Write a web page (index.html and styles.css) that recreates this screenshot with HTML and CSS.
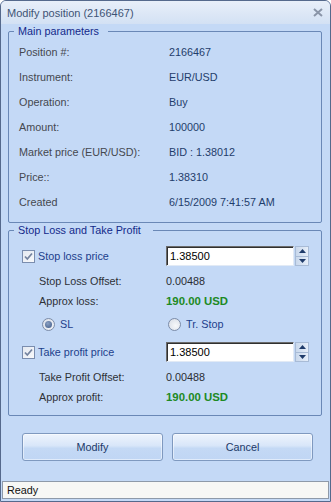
FILE: index.html
```html
<!DOCTYPE html>
<html>
<head>
<meta charset="utf-8">
<link rel="stylesheet" href="styles.css">
</head>
<body>
<div class="window">
  <div class="titlebar">
    <span class="title">Modify position (2166467)</span>
    <svg class="close" width="10" height="9" viewBox="0 0 10 9"><path d="M1 1 L9 8 M9 1 L1 8" stroke="#8a95a8" stroke-width="2" fill="none"/></svg>
  </div>
  <div class="main">
    <fieldset class="group">
      <legend>Main parameters</legend>
      <div class="params">
        <span class="lbl">Position #:</span><span class="val">2166467</span>
        <span class="lbl">Instrument:</span><span class="val">EUR/USD</span>
        <span class="lbl">Operation:</span><span class="val">Buy</span>
        <span class="lbl">Amount:</span><span class="val">100000</span>
        <span class="lbl">Market price (EUR/USD):</span><span class="val">BID : 1.38012</span>
        <span class="lbl">Price::</span><span class="val">1.38310</span>
        <span class="lbl">Created</span><span class="val">6/15/2009 7:41:57 AM</span>
      </div>
    </fieldset>
    <fieldset class="group">
      <legend class="legend2">Stop Loss and Take Profit</legend>
      <div class="sltp">
        <div class="row">
          <label class="check"><span class="cb"><svg width="11" height="11" viewBox="0 0 11 11"><path d="M2 5.5 L4.3 8 L9 2.5" fill="none" stroke="#7584a0" stroke-width="1.8"/></svg></span><span class="cblbl">Stop loss price</span></label>
          <div class="spin"><span class="field">1.38500</span><span class="spinner"><span class="half"><svg width="7" height="4" viewBox="0 0 7 4"><path d="M0 4 L3.5 0 L7 4Z" fill="#1f3b6a"/></svg></span><span class="half"><svg width="7" height="4" viewBox="0 0 7 4"><path d="M0 0 L3.5 4 L7 0Z" fill="#1f3b6a"/></svg></span></span></div>
        </div>
        <div class="row offset"><span class="lbl2">Stop Loss Offset:</span><span class="num">0.00488</span></div>
        <div class="row"><span class="lbl2">Approx loss:</span><span class="money">190.00 USD</span></div>
        <div class="row radios">
          <label class="radio first"><span class="rb"><span class="dot"></span></span><span class="rlbl">SL</span></label>
          <label class="radio second"><span class="rb"></span><span class="rlbl">Tr. Stop</span></label>
        </div>
        <div class="row check2">
          <label class="check"><span class="cb"><svg width="11" height="11" viewBox="0 0 11 11"><path d="M2 5.5 L4.3 8 L9 2.5" fill="none" stroke="#7584a0" stroke-width="1.8"/></svg></span><span class="cblbl">Take profit price</span></label>
          <div class="spin"><span class="field">1.38500</span><span class="spinner"><span class="half"><svg width="7" height="4" viewBox="0 0 7 4"><path d="M0 4 L3.5 0 L7 4Z" fill="#1f3b6a"/></svg></span><span class="half"><svg width="7" height="4" viewBox="0 0 7 4"><path d="M0 0 L3.5 4 L7 0Z" fill="#1f3b6a"/></svg></span></span></div>
        </div>
        <div class="row offset"><span class="lbl2">Take Profit Offset:</span><span class="num">0.00488</span></div>
        <div class="row"><span class="lbl2">Approx profit:</span><span class="money">190.00 USD</span></div>
      </div>
    </fieldset>
    <div class="buttons">
      <button class="btn">Modify</button>
      <button class="btn">Cancel</button>
    </div>
  </div>
  <div class="status">Ready</div>
</div>
</body>
</html>
```
FILE: styles.css
```css
html, body {
  margin: 0;
  padding: 0;
  background: #ffffff;
}
body {
  font-family: "Liberation Sans", Arial, sans-serif;
  font-size: 10.8px;
}
.window {
  width: 331px;
  height: 502px;
  box-sizing: border-box;
  border: 1px solid #55698c;
  border-radius: 6px 6px 0 0;
  background: #c4d9f6;
  display: flex;
  flex-direction: column;
  overflow: hidden;
}
.titlebar {
  height: 23px;
  flex: none;
  display: flex;
  align-items: center;
  justify-content: space-between;
  padding: 0 7px 0 6px;
  background: linear-gradient(#e8eff9, #d3e1f4);
  color: #3e5475;
  font-size: 11px;
}
.close { display: block; }
.main {
  flex: 1;
  display: flex;
  flex-direction: column;
  padding: 0 8px 0 7px;
}
.group {
  margin: 0;
  padding: 0 0 8px 0;
  border: 1px solid #6a88b6;
  border-radius: 2px;
  min-inline-size: 0;
}
.group legend {
  margin-left: 5px;
  padding: 0 9px 0 4px;
  line-height: 15px;
  color: #13298a;
}
.group .legend2 { padding-right: 12px; }
.params {
  display: grid;
  grid-template-columns: 150px 1fr;
  grid-auto-rows: 25px;
  align-items: center;
  padding-left: 10px;
}
.lbl { color: #44484f; }
.val { color: #1f3d6b; }
.sltp {
  display: flex;
  flex-direction: column;
  padding: 8px 0 0 13px;
}
.row {
  display: grid;
  grid-template-columns: 144px auto;
  height: 20px;
  align-items: center;
}
.row.offset { margin-top: 5px; }
.row.radios { margin-top: 3px; }
.row.check2 { margin-top: 8px; }
.check {
  display: flex;
  align-items: center;
  gap: 3px;
}
.cb {
  width: 13px;
  height: 13px;
  box-sizing: border-box;
  border: 1px solid #7a8dae;
  background: linear-gradient(135deg, #e4e9f1, #f8f9fb);
  display: flex;
  align-items: center;
  justify-content: center;
}
.cb svg { display: block; }
.cblbl { color: #1d3f8c; }
.lbl2 { color: #2e3136; padding-left: 17px; }
.num { color: #2a2d33; }
.money { color: #1d8a24; font-weight: bold; font-size: 11.4px; }
.spin {
  display: flex;
  gap: 1px;
  height: 20px;
}
.field {
  width: 128px;
  height: 20px;
  box-sizing: border-box;
  border: 1px solid;
  border-color: #6b6b6b #e2eaf5 #e2eaf5 #6b6b6b;
  box-shadow: inset 1px 1px 0 #303030;
  background: #ffffff;
  color: #000000;
  font-size: 11px;
  padding: 0 0 0 3px;
  display: flex;
  align-items: center;
}
.spinner {
  width: 14px;
  height: 20px;
  box-sizing: border-box;
  border: 1px solid #a8bbd6;
  display: flex;
  flex-direction: column;
  background: linear-gradient(90deg, #c9d8ec, #e6eef9);
}
.half {
  flex: 1;
  display: flex;
  align-items: center;
  justify-content: center;
}
.half + .half { border-top: 1px solid #a8bbd6; }
.half svg { display: block; }
.radio {
  display: flex;
  align-items: center;
  gap: 5px;
}
.radio.first { padding-left: 20px; }
.radio.second { margin-left: 2px; }
.rb {
  width: 13px;
  height: 13px;
  box-sizing: border-box;
  border-radius: 50%;
  border: 1px solid #7c8ca8;
  background: radial-gradient(circle at 60% 60%, #f7f8fa, #d5dbe5);
  display: flex;
  align-items: center;
  justify-content: center;
}
.dot {
  width: 7px;
  height: 7px;
  border-radius: 50%;
  background: radial-gradient(circle at 40% 35%, #8aa0c2, #3e5a88);
}
.rlbl { color: #1d3f8c; }
.buttons {
  display: flex;
  gap: 9px;
  margin-top: 17px;
  padding-left: 14px;
}
.btn {
  width: 141px;
  height: 28px;
  box-sizing: border-box;
  border: 1px solid #7f99bf;
  border-radius: 3px;
  background: linear-gradient(#eef4fd, #d8e6f9 45%, #c4d9f5 55%, #c0d6f4);
  box-shadow: inset 0 0 0 1px rgba(255,255,255,0.5);
  color: #1c3968;
  font-family: "Liberation Sans", Arial, sans-serif;
  font-size: 10.8px;
  padding: 0;
}
.status {
  flex: none;
  height: 18px;
  box-sizing: border-box;
  margin: 0 1px 2px;
  border: 1px solid #8e99a9;
  background: #f7f7f5;
  color: #111111;
  padding-left: 4px;
  display: flex;
  align-items: center;
}
```
